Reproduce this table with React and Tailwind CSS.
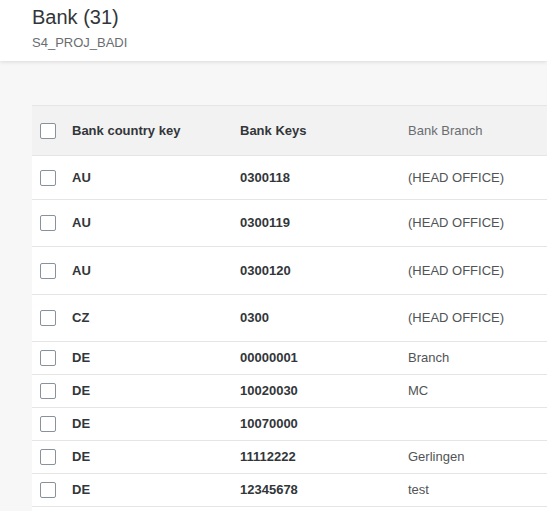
import React from 'react';

const rows = [
  { country: 'AU', key: '0300118', branch: '(HEAD OFFICE)', h: 'h-[44px]' },
  { country: 'AU', key: '0300119', branch: '(HEAD OFFICE)', h: 'h-[47px]' },
  { country: 'AU', key: '0300120', branch: '(HEAD OFFICE)', h: 'h-[48px]' },
  { country: 'CZ', key: '0300', branch: '(HEAD OFFICE)', h: 'h-[47px]' },
  { country: 'DE', key: '00000001', branch: 'Branch', h: 'h-[33px]' },
  { country: 'DE', key: '10020030', branch: 'MC', h: 'h-[33px]' },
  { country: 'DE', key: '10070000', branch: '', h: 'h-[33px]' },
  { country: 'DE', key: '11112222', branch: 'Gerlingen', h: 'h-[33px]' },
  { country: 'DE', key: '12345678', branch: 'test', h: 'h-[33px]' },
];

function Checkbox() {
  return <div className="w-4 h-4 rounded-[2px] border border-[#89919a] bg-white" />;
}

export default function App() {
  return (
    <div className="w-[547px] h-[511px] overflow-hidden bg-[#f7f7f7] font-['Liberation_Sans',Arial,sans-serif] text-[#32363a]">
      {/* Page header */}
      <div className="relative z-10 h-[61px] bg-white px-8 pt-[6px] shadow-[0_1px_4px_rgba(0,0,0,0.12)]">
        <div className="text-[20px] leading-[23px]">Bank (31)</div>
        <div className="mt-[6px] text-[13px] leading-[16px] text-[#6a6d70]">S4_PROJ_BADI</div>
      </div>

      {/* Table */}
      <div className="ml-8 mt-[44px] w-[600px] border-t border-[#e5e5e5]">
        <div className="flex h-[50px] items-center border-b border-[#e5e5e5] bg-[#f2f2f2] text-[13px]">
          <div className="w-[40px] pl-2"><Checkbox /></div>
          <div className="w-[168px] font-bold">Bank country key</div>
          <div className="w-[168px] font-bold">Bank Keys</div>
          <div className="text-[#6a6d70]">Bank Branch</div>
        </div>
        {rows.map((r, i) => (
          <div key={i} className={`flex items-center border-b border-[#e5e5e5] bg-white text-[13px] ${r.h}`}>
            <div className="w-[40px] pl-2"><Checkbox /></div>
            <div className="w-[168px] font-bold">{r.country}</div>
            <div className="w-[168px] font-bold">{r.key}</div>
            <div className="text-[#515456]">{r.branch}</div>
          </div>
        ))}
        <div className="h-[33px] bg-white" />
      </div>
    </div>
  );
}
